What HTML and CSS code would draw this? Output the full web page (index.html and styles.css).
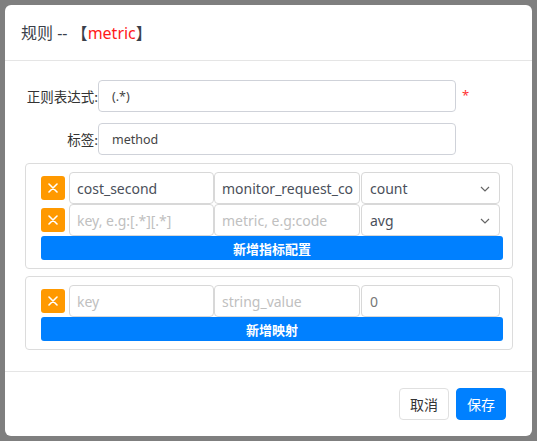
FILE: index.html
```html
<!DOCTYPE html>
<html>
<head>
<meta charset="utf-8">
<link rel="stylesheet" href="styles.css">
</head>
<body>
<div class="modal">
  <div class="modal-header">
    <span class="title">规则 -- 【<span class="red">metric</span>】</span>
  </div>
  <div class="modal-body">
    <div class="form-row">
      <label class="label">正则表达式:</label>
      <div class="field"><span class="val">(.*)</span></div>
      <span class="req">*</span>
    </div>
    <div class="form-row second">
      <label class="label">标签:</label>
      <div class="field"><span class="val">method</span></div>
    </div>
    <div class="card card-one">
      <div class="item-row">
        <span class="xbtn"><svg width="10" height="10" viewBox="0 0 10 10"><path d="M1 1L9 9M9 1L1 9" stroke="#fff" stroke-width="1.6" stroke-linecap="round"/></svg></span>
        <div class="inp w1"><span class="txt">cost_second</span></div>
        <div class="inp w2"><span class="txt clip">monitor_request_count</span></div>
        <div class="inp sel"><span class="txt">count</span><svg class="chev" width="10" height="6" viewBox="0 0 10 6"><path d="M1 1L5 5L9 1" fill="none" stroke="#666" stroke-width="1.2"/></svg></div>
      </div>
      <div class="item-row">
        <span class="xbtn"><svg width="10" height="10" viewBox="0 0 10 10"><path d="M1 1L9 9M9 1L1 9" stroke="#fff" stroke-width="1.6" stroke-linecap="round"/></svg></span>
        <div class="inp w1"><span class="ph">key, e.g:[.*][.*]</span></div>
        <div class="inp w2"><span class="ph">metric, e.g:code</span></div>
        <div class="inp sel"><span class="txt">avg</span><svg class="chev" width="10" height="6" viewBox="0 0 10 6"><path d="M1 1L5 5L9 1" fill="none" stroke="#666" stroke-width="1.2"/></svg></div>
      </div>
      <div class="add-btn">新增指标配置</div>
    </div>
    <div class="card card-two">
      <div class="item-row">
        <span class="xbtn"><svg width="10" height="10" viewBox="0 0 10 10"><path d="M1 1L9 9M9 1L1 9" stroke="#fff" stroke-width="1.6" stroke-linecap="round"/></svg></span>
        <div class="inp w1"><span class="ph">key</span></div>
        <div class="inp w2"><span class="ph">string_value</span></div>
        <div class="inp sel"><span class="num">0</span></div>
      </div>
      <div class="add-btn">新增映射</div>
    </div>
  </div>
  <div class="modal-footer">
    <button class="btn cancel">取消</button>
    <button class="btn save">保存</button>
  </div>
</div>
</body>
</html>
```
FILE: styles.css
```css
* { box-sizing: border-box; }
html, body { margin: 0; padding: 0; }
body {
  background: #7f7f7f;
  padding: 5px;
  font-family: "Noto Sans", "Noto Sans CJK SC", sans-serif;
  color: #333;
}
.modal {
  width: 527px;
  height: 431px;
  background: #fff;
  border-radius: 6px;
  display: flex;
  flex-direction: column;
  overflow: hidden;
}
.modal-header {
  height: 56px;
  border-bottom: 1px solid #e5e5e5;
  display: flex;
  align-items: center;
  padding-left: 16px;
  padding-bottom: 1px;
}
.title { font-size: 16px; color: #3a3f4a; }
.red { color: #ff1a1a; }
.modal-body {
  padding: 19px 19px 0 20px;
  height: 311px;
  border-bottom: 1px solid #e5e5e5;
}
.form-row {
  display: flex;
  align-items: center;
  height: 32px;
}
.form-row.second { margin-top: 11px; }
.label {
  width: 73px;
  text-align: right;
  font-size: 13.5px;
  color: #333;
  font-family: "Noto Sans CJK SC", sans-serif;
}
.field {
  width: 358px;
  height: 32px;
  border: 1px solid #cfd2d9;
  border-radius: 4px;
  display: flex;
  align-items: center;
  padding-left: 13px;
  font-size: 12.5px;
  color: #444;
}
.req {
  color: #f33;
  margin-left: 6px;
  font-size: 13px;
  margin-top: -3px;
}
.card {
  border: 1px solid #dcdcdc;
  border-radius: 4px;
  margin-top: 8px;
  padding: 8px 9px 8px 15px;
  width: 488px;
}
.card-two { margin-top: 7px; }
.item-row {
  display: flex;
  align-items: center;
  height: 32px;
}
.xbtn {
  width: 24px;
  height: 24px;
  background: #ff9900;
  border-radius: 3px;
  display: flex;
  align-items: center;
  justify-content: center;
  margin-right: 4px;
  flex: none;
}
.inp {
  height: 32px;
  border: 1px solid #d8d8d8;
  border-radius: 4px;
  display: flex;
  align-items: center;
  padding: 0 6px 0 7px;
  font-size: 14px;
  white-space: nowrap;
  flex: none;
}
.clip {
  overflow: hidden;
  min-width: 0;
  display: block;
}
.w1 { width: 145px; }
.w2 { width: 146px; }
.sel {
  width: 139px;
  margin-left: 1px;
  position: relative;
  padding-left: 8px;
}
.txt { color: #4a4f5a; }
.ph { color: #c0c0c0; }
.num { color: #777; }
.chev { position: absolute; right: 9px; top: 13px; }
.add-btn {
  height: 24px;
  background: #0080ff;
  color: #fff;
  border-radius: 3px;
  display: flex;
  align-items: center;
  justify-content: center;
  font-size: 13px;
  font-weight: bold;
  font-family: "Noto Sans CJK SC", sans-serif;
}
.modal-footer {
  flex: 1;
  display: flex;
  justify-content: flex-end;
  align-items: center;
  padding-right: 26px;
  gap: 7px;
}
.btn {
  width: 50px;
  height: 32px;
  border-radius: 4px;
  font-size: 14px;
  font-family: "Noto Sans CJK SC", sans-serif;
  padding: 0;
}
.cancel { background: #fff; border: 1px solid #e0e0e0; color: #333; }
.save { background: #0080ff; border: 1px solid #0080ff; color: #fff; }
```
